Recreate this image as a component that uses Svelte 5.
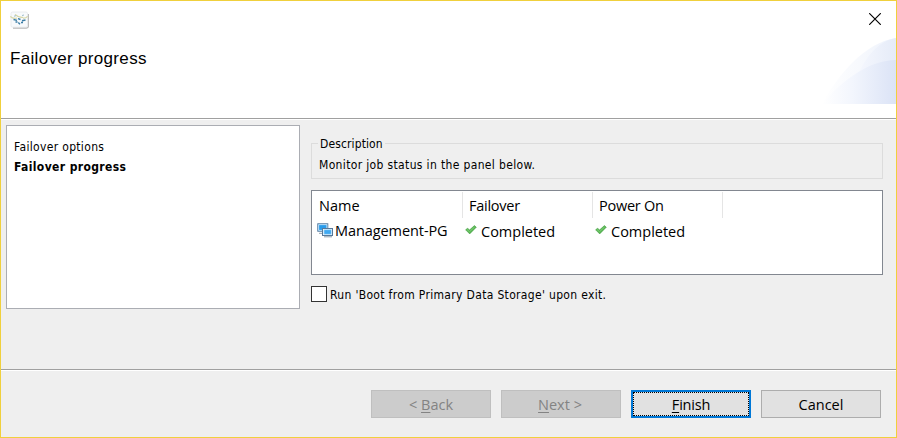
<script>
  const steps = ['Failover options', 'Failover progress'];
  const columns = ['Name', 'Failover', 'Power On'];
  const rows = [{ name: 'Management-PG', failover: 'Completed', power: 'Completed' }];
  let bootOnExit = $state(false);
</script>

{#snippet check()}
  <svg class="check" width="12" height="10" viewBox="0 0 12 10">
    <path d="M0.6 4.8L2.7 3.2L4.5 5L9.4 0.6L11.3 2.2L4.7 8.9Z" fill="#57b552" stroke="#46a044" stroke-width=".6" />
    <path d="M2 4.5L4.5 6.7L9.6 2" fill="none" stroke="#7fd079" stroke-width="1" />
  </svg>
{/snippet}

<div class="window">
  <header>
    <div class="titlebar">
      <svg class="logo" width="20" height="19" viewBox="0 0 20 19">
        <path d="M3 17H16.5Q18.3 17 18.3 15.5V3" fill="none" stroke="#b8b8b8" stroke-width="1.3" />
        <rect x="1" y="1" width="16.5" height="15.2" rx="1.5" fill="#f8fafc" stroke="#e3e5e8" stroke-width=".7" />
        <path d="M0.3 5.5Q3 8 7 7M5 3.5Q9 7 13 6.3M13 7.2Q17 7 17.3 5" fill="none" stroke="#d6d6a6" stroke-width="1.2" />
        <path d="M4 5.2L6 4.7M12 4.5L14 4" stroke="#9fbfcc" stroke-width="1" />
        <path d="M3.5 8.5L7 9.4M8 7.6L10.5 8.5M12 9.8L15.5 9M5.5 11H7.5M8.3 11.5L10 13.2M11 11.5H13" fill="none" stroke="#3c7ea6" stroke-width="1.4" />
      </svg>
      <svg class="close" width="12" height="12" viewBox="0 0 12 12">
        <path d="M.2 .2L11.8 11.8M11.8 .2L.2 11.8" stroke="#000" stroke-width="1.15" />
      </svg>
    </div>
    <h1>Failover progress</h1>
    <svg class="swoosh" width="74" height="67" viewBox="0 0 74 67">
      <defs>
        <linearGradient id="outer"><stop offset="0" stop-color="#fff" /><stop offset=".5" stop-color="#f7f9fd" /><stop offset="1" stop-color="#edf2fc" /></linearGradient>
        <linearGradient id="upper"><stop offset="0" stop-color="#f6f8fe" /><stop offset="1" stop-color="#e5ebf8" /></linearGradient>
        <linearGradient id="lower"><stop offset="0" stop-color="#fff" /><stop offset=".4" stop-color="#f3f6fd" /><stop offset="1" stop-color="#dbe3f6" /></linearGradient>
      </defs>
      <path d="M0 67C16 38 42 6 74 1V67Z" fill="url(#outer)" />
      <path d="M34 42C44 18 57 4 74 1V67H34Z" fill="url(#upper)" />
      <path d="M0 67C20 43 48 23 74 23V67Z" fill="url(#lower)" />
    </svg>
  </header>

  <main>
    <nav>
      {#each steps as step, i}
        <div class="step" class:current={i === 1}>{step}</div>
      {/each}
    </nav>
    <section>
      <fieldset>
        <legend>Description</legend>
        <p>Monitor job status in the panel below.</p>
      </fieldset>
      <div class="table">
        <div class="row head">
          {#each columns as column}<div class="cell">{column}</div>{/each}
        </div>
        {#each rows as row}
          <div class="row data">
            <div class="cell name">
              <svg class="machines" width="17" height="15" viewBox="0 0 17 15">
                <rect x=".8" y=".8" width="10" height="7.4" fill="#55b1f2" stroke="#58799a" stroke-width="1" />
                <rect x="1.7" y="1.7" width="8.2" height="5.6" fill="#299bea" stroke="#d7effc" stroke-width=".8" />
                <path d="M2 10.3H5" stroke="#8b9caa" />
                <rect x="5.5" y="5.5" width="10" height="7" fill="#fff" stroke="#58799a" />
                <rect x="6.9" y="6.7" width="7.4" height="4.6" fill="#40a9f1" stroke="#b9e0f9" stroke-width=".8" />
                <path d="M7 13.8H15" stroke="#8b9caa" />
              </svg>
              <span>{row.name}</span>
            </div>
            <div class="cell status">{@render check()}<span>{row.failover}</span></div>
            <div class="cell status">{@render check()}<span>{row.power}</span></div>
          </div>
        {/each}
      </div>
      <label>
        <input type="checkbox" bind:checked={bootOnExit} />
        <span>Run 'Boot from Primary Data Storage' upon exit.</span>
      </label>
    </section>
  </main>

  <footer>
    <button disabled><span>&lt; <u>B</u>ack</span></button>
    <button class="next" disabled><span><u>N</u>ext &gt;</span></button>
    <button class="default"><span><u>F</u>inish</span></button>
    <button><span>Cancel</span></button>
  </footer>
</div>

<style>
  .window {
    box-sizing: border-box;
    width: 897px;
    height: 438px;
    border: 1px solid #f0d03c;
    background: #efefef;
    color: #000;
    display: flex;
    flex-direction: column;
    overflow: hidden;
    font: 12px/16px 'DejaVu Sans Condensed', 'DejaVu Sans', sans-serif;
    font-stretch: condensed;
    letter-spacing: 0.33px;
  }
  header {
    position: relative;
    box-sizing: border-box;
    height: 118px;
    flex: none;
    background: #fff;
    border-bottom: 1px solid #a0a0a0;
  }
  .titlebar {
    display: flex;
    justify-content: space-between;
    padding: 10px 15px 0 9px;
    height: 30px;
  }
  .close { margin-top: 2px; }
  h1 {
    margin: 7px 0 0 9px;
    font: 17px/22px 'Liberation Sans', Arial, sans-serif;
    letter-spacing: 0.32px;
  }
  .swoosh { position: absolute; right: 0; top: 36px; }
  main {
    box-sizing: border-box;
    height: 251px;
    flex: none;
    display: flex;
    align-items: flex-start;
    gap: 11px;
    padding: 5px 13px 0 5px;
    border-top: 1px solid #fff;
    border-bottom: 1px solid #a0a0a0;
  }
  nav {
    box-sizing: border-box;
    width: 294px;
    height: 184px;
    padding: 11px 7px;
    background: #fff;
    border: 1px solid #abadb3;
  }
  .step { height: 20px; line-height: 20px; white-space: nowrap; }
  .current { font-weight: bold; letter-spacing: 0.38px; }
  section { flex: 1; min-width: 0; }
  fieldset {
    box-sizing: border-box;
    min-width: 0;
    height: 44px;
    margin: 10px 0 0;
    padding: 0 7px;
    border: 1px solid #dcdcdc;
  }
  legend { padding: 1px 2px 0; height: 16px; margin-left: -1px; letter-spacing: 0.12px; box-sizing: border-box; }
  p { margin: 6px 0 0; letter-spacing: 0.35px; }
  .table {
    box-sizing: border-box;
    height: 85px;
    margin-top: 11px;
    padding-top: 1px;
    background: #fff;
    border: 1px solid #828790;
    font: 14.5px/26px 'Open Sans', 'Noto Sans', sans-serif;
    letter-spacing: 0;
  }
  .row { display: flex; height: 26px; }
  .cell { box-sizing: border-box; width: 130px; padding-left: 6px; white-space: nowrap; }
  .cell:first-child { width: 151px; padding-left: 7px; }
  .head .cell { border-right: 1px solid #e5e5e5; line-height: 28px; letter-spacing: -0.25px; }
  .head .cell:first-child { letter-spacing: 0; }
  .data .cell { display: flex; align-items: flex-start; }
  .data .cell.name { padding-left: 5px; gap: 1px; letter-spacing: -0.08px; }
  .machines { margin-top: 5px; }
  .data .cell.status { padding-left: 2px; gap: 4px; line-height: 27px; }
  .check { margin-top: 7px; }
  label { display: flex; align-items: center; gap: 3px; height: 16px; margin-top: 11px; }
  label span { padding-top: 2px; }
  input {
    appearance: none;
    box-sizing: border-box;
    width: 16px;
    height: 16px;
    margin: 0;
    border: 1px solid #333;
    background: #fff;
  }
  footer {
    flex: 1;
    display: flex;
    justify-content: flex-end;
    align-items: flex-start;
    gap: 10px;
    padding: 19px 15px 0;
    border-top: 1px solid #fff;
  }
  button {
    box-sizing: border-box;
    width: 120px;
    height: 28px;
    padding: 1px 0 0;
    border: 1px solid #adadad;
    background: #e1e1e1;
    color: #000;
    font: 14.5px/26px 'Open Sans', 'Noto Sans', sans-serif;
    letter-spacing: 0;
  }
  button:disabled { background: #ccc; border-color: #bfbfbf; color: #838383; }
  .next { padding-right: 2px; }
  .default { padding: 0; border: 2px solid #0078d7; line-height: 23px; letter-spacing: -0.2px; }
  .default span { display: block; height: 24px; box-sizing: border-box; border: 1px dotted #000; }
  u { text-underline-offset: 2px; text-decoration-thickness: 1px; text-decoration-skip-ink: none; }
</style>
